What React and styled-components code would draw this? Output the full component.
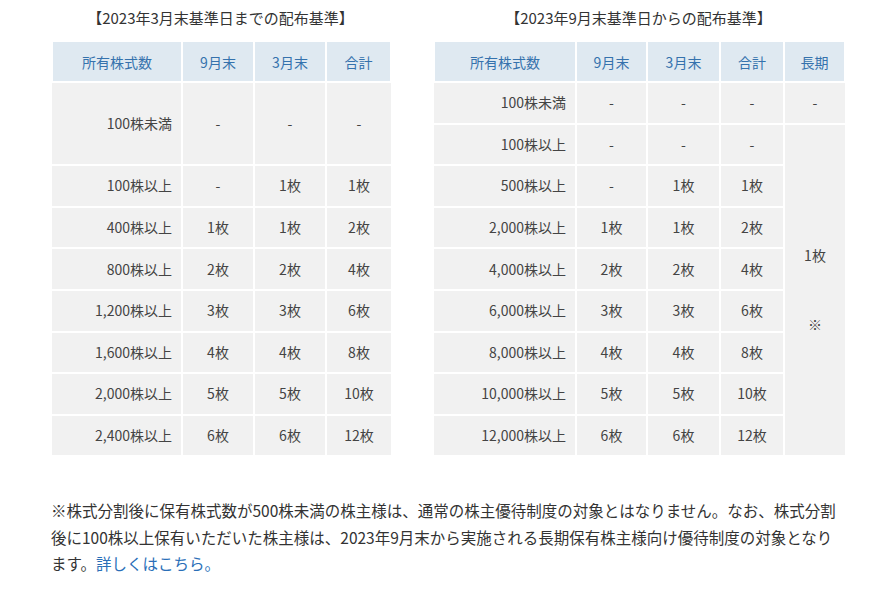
import React from 'react';
import styled, { createGlobalStyle } from 'styled-components';

const GlobalStyle = createGlobalStyle`
  body {
    margin: 0;
    background: #fff;
    font-family: "Noto Sans CJK JP", "Noto Sans", sans-serif;
    color: #333;
  }
`;

const Page = styled.div`
  width: 870px;
  padding: 6px 0 0 51px;
  box-sizing: border-box;
`;

const Tables = styled.div`
  display: flex;
  align-items: flex-start;
  gap: 43px;
`;

const Block = styled.div`
  display: flex;
  flex-direction: column;
  width: ${({ width }) => width}px;
`;

const Title = styled.p`
  margin: 0 0 12px;
  font-size: 15px;
  line-height: 24px;
  text-align: center;
  color: #333;
`;

const Table = styled.table`
  width: 100%;
  border-collapse: collapse;
  table-layout: fixed;
  font-size: 14px;
`;

const Th = styled.th`
  height: 39px;
  padding: 0;
  background: #dfe9f1;
  color: #3572ad;
  font-weight: normal;
  text-align: center;
  border: 2px solid #fff;
  border-top: 0;
`;

const Td = styled.td`
  height: ${({ tall }) => (tall ? 81.2 : 39.6)}px;
  padding: ${({ label }) => (label ? '0 9px 0 0' : '0')};
  background: #f1f1f1;
  color: #444;
  text-align: ${({ label }) => (label ? 'right' : 'center')};
  vertical-align: middle;
  line-height: 23px;
  border: 2px solid #fff;
  &:first-child {
    border-left: 0;
  }
  &:last-child {
    border-right: 0;
  }
`;

const Note = styled.p`
  margin: 40px 0 0;
  width: 795px;
  font-size: 15.5px;
  line-height: 26.5px;
  color: #333;
`;

const MoreLink = styled.a`
  color: #2a6fb8;
  text-decoration: none;
`;

const oldRows = [
  ['100株未満', '-', '-', '-'],
  ['100株以上', '-', '1枚', '1枚'],
  ['400株以上', '1枚', '1枚', '2枚'],
  ['800株以上', '2枚', '2枚', '4枚'],
  ['1,200株以上', '3枚', '3枚', '6枚'],
  ['1,600株以上', '4枚', '4枚', '8枚'],
  ['2,000株以上', '5枚', '5枚', '10枚'],
  ['2,400株以上', '6枚', '6枚', '12枚'],
];

const newRows = [
  ['100株未満', '-', '-', '-'],
  ['100株以上', '-', '-', '-'],
  ['500株以上', '-', '1枚', '1枚'],
  ['2,000株以上', '1枚', '1枚', '2枚'],
  ['4,000株以上', '2枚', '2枚', '4枚'],
  ['6,000株以上', '3枚', '3枚', '6枚'],
  ['8,000株以上', '4枚', '4枚', '8枚'],
  ['10,000株以上', '5枚', '5枚', '10枚'],
  ['12,000株以上', '6枚', '6枚', '12枚'],
];

function Cols({ widths }) {
  return (
    <colgroup>
      {widths.map((w, i) => (
        <col key={i} style={{ width: w }} />
      ))}
    </colgroup>
  );
}

function OldTable() {
  return (
    <Block width={339}>
      <Title>【2023年3月末基準日までの配布基準】</Title>
      <Table>
        <Cols widths={[130, 72, 72, 65]} />
        <thead>
          <tr>
            <Th>所有株式数</Th>
            <Th>9月末</Th>
            <Th>3月末</Th>
            <Th>合計</Th>
          </tr>
        </thead>
        <tbody>
          {oldRows.map((row, i) => (
            <tr key={row[0]}>
              {row.map((cell, j) => (
                <Td key={j} label={j === 0} tall={i === 0}>
                  {cell}
                </Td>
              ))}
            </tr>
          ))}
        </tbody>
      </Table>
    </Block>
  );
}

function NewTable() {
  return (
    <Block width={411}>
      <Title>【2023年9月末基準日からの配布基準】</Title>
      <Table>
        <Cols widths={[142, 71, 73, 64, 61]} />
        <thead>
          <tr>
            <Th>所有株式数</Th>
            <Th>9月末</Th>
            <Th>3月末</Th>
            <Th>合計</Th>
            <Th>長期</Th>
          </tr>
        </thead>
        <tbody>
          {newRows.map((row, i) => (
            <tr key={row[0]}>
              {row.map((cell, j) => (
                <Td key={j} label={j === 0}>
                  {cell}
                </Td>
              ))}
              {i === 0 && <Td>-</Td>}
              {i === 1 && (
                <Td rowSpan={8}>
                  1枚
                  <br />
                  <br />
                  <br />※
                </Td>
              )}
            </tr>
          ))}
        </tbody>
      </Table>
    </Block>
  );
}

export default function App() {
  return (
    <>
      <GlobalStyle />
      <Page>
        <Tables>
          <OldTable />
          <NewTable />
        </Tables>
        <Note>
          ※株式分割後に保有株式数が500株未満の株主様は、通常の株主優待制度の対象とはなりません。なお、株式分割後に100株以上保有いただいた株主様は、2023年9月末から実施される長期保有株主様向け優待制度の対象となります。
          <MoreLink href="#">詳しくはこちら。</MoreLink>
        </Note>
      </Page>
    </>
  );
}
